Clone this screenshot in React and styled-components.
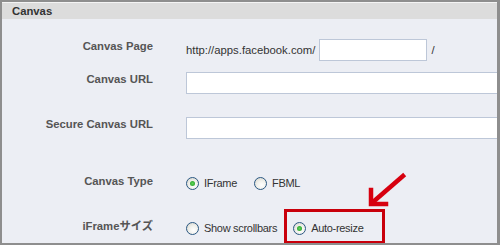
import React from "react";
import styled, { createGlobalStyle } from "styled-components";

const GlobalStyle = createGlobalStyle`
  html, body {
    margin: 0;
    padding: 0;
    background: #fff;
  }
  body {
    font-family: "Liberation Sans", Arial, "Noto Sans CJK JP", sans-serif;
  }
`;

const Frame = styled.div`
  position: relative;
  width: 500px;
  height: 245px;
  box-sizing: border-box;
  border: 2px solid #8e8e8e;
  border-right-width: 3px;
  background: #eceef4;
  overflow: hidden;
`;

const Header = styled.div`
  height: 16px;
  line-height: 16px;
  border-top: 1px solid #f4f4f4;
  background: #dcdcdc;
  padding-left: 10px;
  font-size: 11.3px;
  font-weight: bold;
  color: #333;
`;

const Body = styled.div`
  padding-top: 20px;
`;

const Row = styled.div`
  display: grid;
  grid-template-columns: 151px minmax(0, 1fr);
  column-gap: 33px;
  align-items: start;
  margin-top: ${(p) => p.$top || 0}px;
`;

const Label = styled.div`
  text-align: right;
  font-size: 11.3px;
  line-height: 14px;
  font-weight: bold;
  color: #555;
  white-space: nowrap;
`;

const Value = styled.div`
  display: flex;
  align-items: center;
  gap: ${(p) => p.$gap || 0}px;
  font-size: 11.3px;
  color: #333;
  white-space: nowrap;
  padding-top: ${(p) => p.$pad || 0}px;
`;

const TextInput = styled.input`
  box-sizing: border-box;
  width: ${(p) => p.$w}px;
  height: 22px;
  margin: 0;
  padding: 2px 3px;
  border: 1px solid #bdc7d8;
  background: #fff;
  font: inherit;
  flex-shrink: 0;
  outline: none;
`;

const Option = styled.label`
  position: relative;
  display: inline-flex;
  align-items: center;
  gap: 5px;
  font-size: 11px;
  letter-spacing: -0.3px;
  line-height: 13px;
  color: #333;
  ${(p) =>
    p.$highlight &&
    `
    &::after {
      content: "";
      position: absolute;
      left: -9px;
      top: -13px;
      right: -22px;
      bottom: -9px;
      border: 3px solid #c9000b;
      pointer-events: none;
    }
  `}
`;

const Radio = styled.span`
  box-sizing: border-box;
  width: 13px;
  height: 13px;
  border-radius: 50%;
  border: 1px solid #2a5782;
  background: radial-gradient(circle at 60% 65%, #ffffff 0%, #f1f1ec 45%, #cfcfc6 100%);
  display: flex;
  align-items: center;
  justify-content: center;
  flex-shrink: 0;
  &::before {
    content: "";
    width: 5px;
    height: 5px;
    border-radius: 50%;
    background: ${(p) => (p.$checked ? "radial-gradient(circle, #5fd35a 0%, #1e9a1e 100%)" : "transparent")};
  }
`;

const Arrow = styled.svg`
  position: absolute;
  left: 0;
  top: 0;
  pointer-events: none;
`;

function Field({ label, top, children, gap, pad }) {
  return (
    <Row $top={top}>
      <Label>{label}</Label>
      <Value $gap={gap} $pad={pad}>
        {children}
      </Value>
    </Row>
  );
}

export default function App() {
  return (
    <>
      <GlobalStyle />
      <Frame>
        <Header>Canvas</Header>
        <Body>
          <Field label="Canvas Page" gap={4}>
            <span>http://apps.facebook.com/</span>
            <TextInput $w={108} />
            <span>/</span>
          </Field>
          <Field label="Canvas URL" top={11}>
            <TextInput $w={330} />
          </Field>
          <Field label="Secure Canvas URL" top={23}>
            <TextInput $w={330} />
          </Field>
          <Field label="Canvas Type" top={35} gap={17} pad={3}>
            <Option>
              <Radio $checked />
              IFrame
            </Option>
            <Option>
              <Radio />
              FBML
            </Option>
          </Field>
          <Field label="iFrameサイズ" top={29} gap={16} pad={3}>
            <Option>
              <Radio />
              Show scrollbars
            </Option>
            <Option $highlight>
              <Radio $checked />
              Auto-resize
            </Option>
          </Field>
        </Body>
        <Arrow width="500" height="245" viewBox="0 0 500 245">
          <g stroke="#d7000f" strokeWidth="4.5" fill="none" strokeLinecap="square">
            <line x1="371" y1="200" x2="401" y2="174" />
            <polyline points="369,188 369,202 384,202" />
          </g>
        </Arrow>
      </Frame>
    </>
  );
}
